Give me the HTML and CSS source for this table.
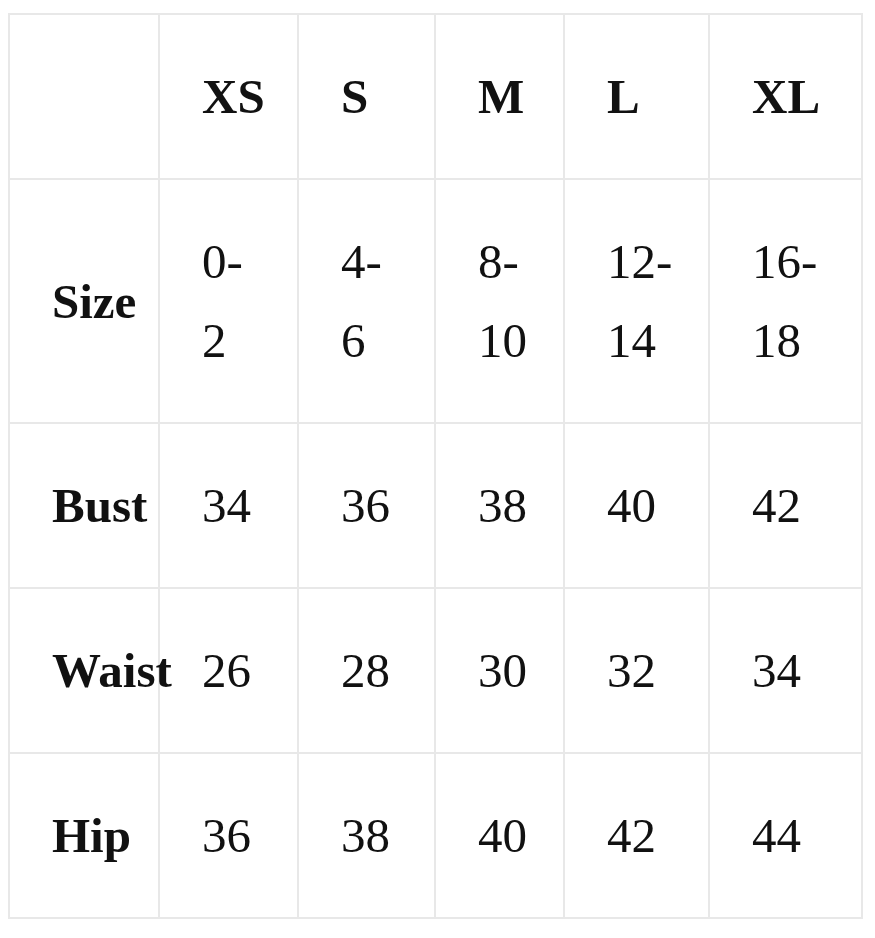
FILE: index.html
```html
<!DOCTYPE html>
<html>
<head>
<meta charset="utf-8">
<link rel="stylesheet" href="styles.css">
</head>
<body>
<table class="size-table">
  <colgroup>
    <col class="c1"><col class="c2"><col class="c3"><col class="c4"><col class="c5"><col class="c6">
  </colgroup>
  <tr>
    <th></th><th>XS</th><th>S</th><th>M</th><th>L</th><th>XL</th>
  </tr>
  <tr>
    <th>Size</th><td>0-2</td><td>4-6</td><td>8-10</td><td>12-14</td><td>16-18</td>
  </tr>
  <tr>
    <th>Bust</th><td>34</td><td>36</td><td>38</td><td>40</td><td>42</td>
  </tr>
  <tr>
    <th>Waist</th><td>26</td><td>28</td><td>30</td><td>32</td><td>34</td>
  </tr>
  <tr>
    <th>Hip</th><td>36</td><td>38</td><td>40</td><td>42</td><td>44</td>
  </tr>
</table>
</body>
</html>
```
FILE: styles.css
```css
html, body {
  margin: 0;
  padding: 0;
  background: #fff;
}
.size-table {
  margin: 13px 0 0 8px;
  width: 855px;
  table-layout: fixed;
  border-collapse: collapse;
  font-family: "Liberation Serif", "Times New Roman", serif;
  font-size: 49px;
  line-height: 79px;
  color: #111;
}
.c1 { width: 150px; }
.c2 { width: 139px; }
.c3 { width: 137px; }
.c4 { width: 129px; }
.c5 { width: 145px; }
.c6 { width: 153px; }
.size-table th,
.size-table td {
  border: 2px solid #e8e8e8;
  padding: 42px 36px 42px 42px;
  text-align: left;
  vertical-align: middle;
  overflow: visible;
}
.size-table th {
  font-weight: bold;
}
.size-table td {
  font-weight: normal;
}
```
